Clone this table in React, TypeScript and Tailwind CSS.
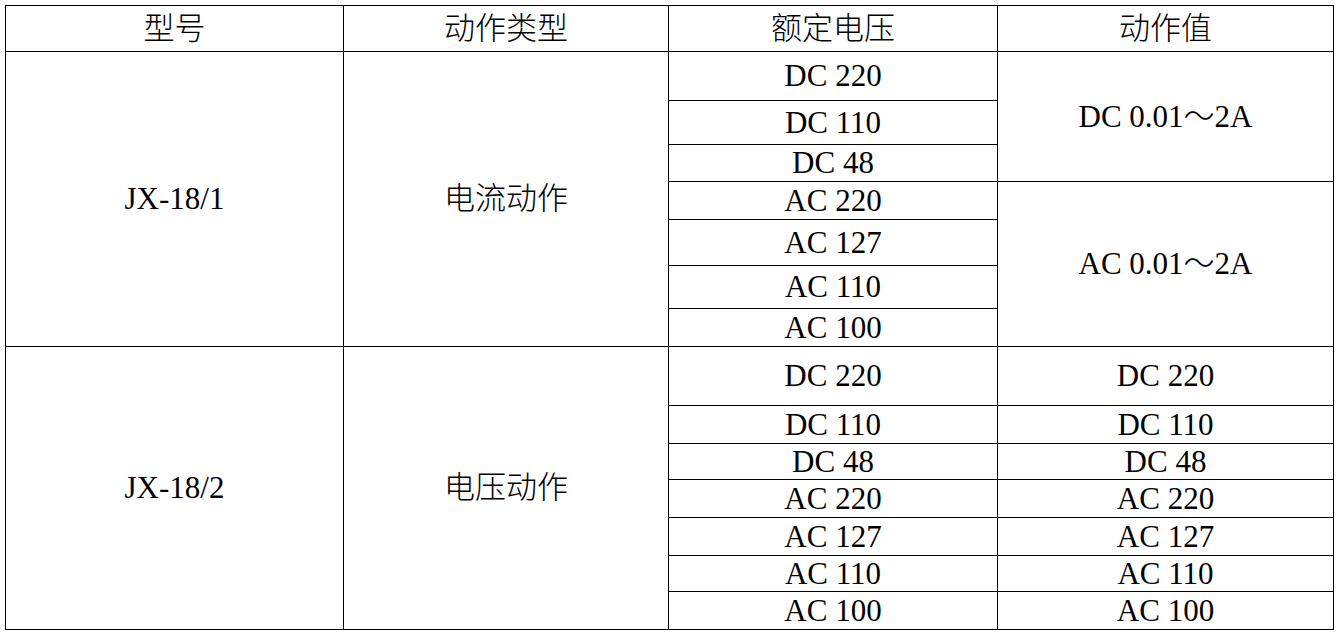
const cell = "border border-black p-0 text-center align-middle";

const group2 = [
  ["DC 220", "h-[59px]"],
  ["DC 110", "h-[38px]"],
  ["DC 48", "h-[36px]"],
  ["AC 220", "h-[38px]"],
  ["AC 127", "h-[38px]"],
  ["AC 110", "h-[36px]"],
  ["AC 100", "h-[38px]"],
];

export default function App() {
  return (
    <div className="bg-white w-[1338px] h-[633px] pt-[5px] pl-[5px]">
      <table
        className="table-fixed border-collapse text-black text-[31px] leading-[30px] font-light"
        style={{ fontFamily: '"Liberation Serif", "Noto Sans CJK SC", serif' }}
      >
        <colgroup>
          <col className="w-[338px]" />
          <col className="w-[325px]" />
          <col className="w-[329px]" />
          <col className="w-[336px]" />
        </colgroup>
        <tbody>
          <tr>
            <td className={`${cell} h-[46px]`}>型号</td>
            <td className={cell}>动作类型</td>
            <td className={cell}>额定电压</td>
            <td className={cell}>动作值</td>
          </tr>

          {/* 电流动作 */}
          <tr>
            <td className={cell} rowSpan={7}>JX-18/1</td>
            <td className={cell} rowSpan={7}>电流动作</td>
            <td className={`${cell} h-[49px]`}>DC 220</td>
            <td className={cell} rowSpan={3}>DC 0.01～2A</td>
          </tr>
          <tr>
            <td className={`${cell} h-[44px]`}>DC 110</td>
          </tr>
          <tr>
            <td className={`${cell} h-[37px]`}>DC 48</td>
          </tr>
          <tr>
            <td className={`${cell} h-[38px]`}>AC 220</td>
            <td className={cell} rowSpan={4}>AC 0.01～2A</td>
          </tr>
          <tr>
            <td className={`${cell} h-[46px]`}>AC 127</td>
          </tr>
          <tr>
            <td className={`${cell} h-[43px]`}>AC 110</td>
          </tr>
          <tr>
            <td className={`${cell} h-[38px]`}>AC 100</td>
          </tr>

          {/* 电压动作 */}
          {group2.map(([v, h], i) => (
            <tr key={v}>
              {i === 0 && (
                <>
                  <td className={cell} rowSpan={7}>JX-18/2</td>
                  <td className={cell} rowSpan={7}>电压动作</td>
                </>
              )}
              <td className={`${cell} ${h}`}>{v}</td>
              <td className={cell}>{v}</td>
            </tr>
          ))}
        </tbody>
      </table>
    </div>
  );
}
